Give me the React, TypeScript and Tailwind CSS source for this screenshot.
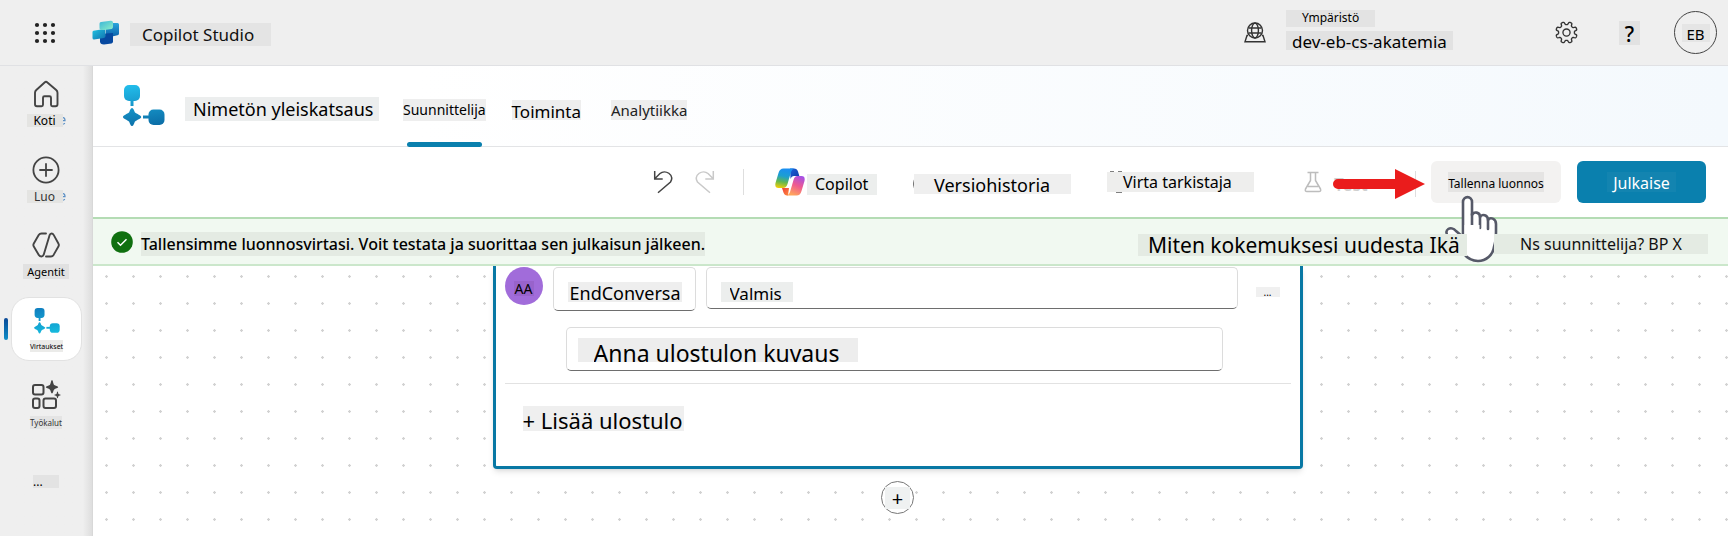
import React from "react";

function Tag({ className = "", children }: { className?: string; children?: React.ReactNode }) {
  return (
    <span className={`inline-flex shrink-0 whitespace-nowrap leading-none ${className}`}>{children}</span>
  );
}

function Waffle() {
  const c = [3, 11, 19];
  return (
    <svg width="22" height="22" viewBox="0 0 22 22" fill="#222">
      {c.map((y) => c.map((x) => <circle key={`${x}-${y}`} cx={x} cy={y} r="2.1" />))}
    </svg>
  );
}

function StudioLogo() {
  return (
    <svg width="28" height="26" viewBox="0 0 28 26">
      <defs>
        <linearGradient id="s1" x1="0" y1="0" x2="1" y2="1">
          <stop offset="0" stopColor="#3bb5d8" />
          <stop offset="1" stopColor="#8ff0c8" />
        </linearGradient>
        <linearGradient id="s2" x1="0" y1="0" x2="1" y2="1">
          <stop offset="0" stopColor="#22c3e0" />
          <stop offset="1" stopColor="#1173b0" />
        </linearGradient>
        <linearGradient id="s3" x1="0" y1="0" x2="0" y2="1">
          <stop offset="0" stopColor="#2aa5dc" />
          <stop offset="1" stopColor="#0a62ac" />
        </linearGradient>
      </defs>
      <path d="M14 3h11.500q1.500 0 1.500 1.500v9q0 1.500-1.500 1.800l-5.500 1.200h-6z" fill="url(#s3)" />
      <path d="M8 14l13-1v8.500q0 1.500-1.500 2l-7.500 1q-4 0-4-3z" fill="#0749a0" />
      <path d="M1.500 10.700l10.500-1.700q1.500 0 1.500 1.500v5.500q0 1.500-1.500 2l-10 1.500q-1.500 0-1.500-1.500v-6q0-1.100 1-1.300z" fill="url(#s2)" />
      <path d="M9 2l9.500-1.200q2.500-.300 2.500 1.700v4.500q0 1.700-1.500 2l-7 1q-5 .500-5-2v-4.200q0-1.500 1.500-1.800z" fill="url(#s1)" />
    </svg>
  );
}

function FlowIcon({ id, size, from, to }: { id: string; size: number; from: string; to: string }) {
  return (
    <svg width={size} height={size} viewBox="0 0 42 42">
      <defs>
        <linearGradient id={id} gradientUnits="userSpaceOnUse" x1="8" y1="0" x2="14" y2="42">
          <stop offset="0" stopColor={from} />
          <stop offset="1" stopColor={to} />
        </linearGradient>
      </defs>
      <g fill={`url(#${id})`}>
        <rect x="1" y="0" width="16" height="16" rx="5" />
        <rect x="7.500" y="15" width="3" height="6" />
        <path d="M9 23c1.500 0 2 2.500 2.800 4.300 2 2 6.400 2.800 6.400 4.700s-4.400 2.700-6.400 4.700C11 38.500 10.500 41 9 41s-2-2.500-2.800-4.300C4.200 34.700 0 33.900 0 32s4.200-2.700 6.200-4.700C7 25.500 7.500 23 9 23z" />
        <rect x="20" y="30.500" width="7" height="3" />
        <rect x="25.500" y="24.500" width="16" height="15.500" rx="5" />
      </g>
    </svg>
  );
}

function EnvironmentIcon() {
  return (
    <svg width="22" height="22" viewBox="0 0 22 22" fill="none" stroke="#333" strokeWidth="1.400">
      <circle cx="11" cy="8.500" r="7.500" />
      <ellipse cx="11" cy="8.500" rx="3.400" ry="7.500" />
      <path d="M4.500 6h13M4.500 11h13M4 13.500H3L1 19.800h20l-2-6.300h-1" />
    </svg>
  );
}

function gearPath() {
  let d = "";
  for (let i = 0; i < 160; i++) {
    const t = (i / 160) * Math.PI * 2;
    const r = 8.9 + 1.35 * Math.tanh(2.6 * Math.cos(8 * t + Math.PI));
    d += `${i ? "L" : "M"}${(11 + r * Math.cos(t)).toFixed(2)} ${(11 + r * Math.sin(t)).toFixed(2)}`;
  }
  return d + "Z";
}

function GearIcon() {
  return (
    <svg width="23" height="23" viewBox="0 0 22 22" fill="none" stroke="#333" strokeWidth="1.300" strokeLinejoin="round">
      <path d={gearPath()} />
      <circle cx="11" cy="11" r="3.400" />
    </svg>
  );
}

function HomeIcon() {
  return (
    <svg width="26" height="28" viewBox="0 0 26 28" fill="none" stroke="#444" strokeWidth="1.900" strokeLinejoin="round">
      <path d="M11.600 2.500q1.400-1.300 2.800 0l8.800 7.500q1.300 1.200 1.300 2.800v11.500q0 2-2 2h-3q-1.500 0-1.500-1.500v-7q0-1.500-1.500-1.500h-5q-1.500 0-1.500 1.500v7q0 1.500-1.500 1.500h-4.500q-2 0-2-2V12.800q0-1.600 1.300-2.800z" />
    </svg>
  );
}

function AddIcon() {
  return (
    <svg width="28" height="28" viewBox="0 0 28 28" fill="none" stroke="#444" strokeWidth="1.800" strokeLinecap="round">
      <circle cx="14" cy="14" r="12.600" />
      <path d="M14 8v12M8 14h12" />
    </svg>
  );
}

function AgentIcon() {
  return (
    <svg width="28" height="26" viewBox="0 0 28 26" fill="none" stroke="#444" strokeWidth="1.900" strokeLinejoin="round" strokeLinecap="round">
      <path d="M14 1.500H9.500q-1.800 0-2.800 1.600L1.800 11.500q-.900 1.500 0 3l5 8.400q1 1.600 2.700 1.600 1.500 0 2.200-1.800L17.500 3.400q.700-1.900 2-1.900 1.400 0 2.300 1.600l4.600 8.400q.900 1.500 0 3l-4.800 8.400q-1 1.600-2.600 1.600H14" />
    </svg>
  );
}

function ToolsIcon() {
  return (
    <svg width="30" height="30" viewBox="0 0 30 30" fill="none" stroke="#444" strokeWidth="2">
      <rect x="2" y="5" width="10.500" height="9.500" rx="2" />
      <rect x="2" y="18.500" width="6.500" height="9.500" rx="2" />
      <rect x="12.500" y="18.500" width="12.500" height="9.500" rx="2" />
      <path stroke="none" fill="#444" d="M21 0c1 0 1.200 4 2.200 5s4 1.200 4 2.200-3 1.200-4 2.200-1.200 4-2.200 4-1.200-3-2.200-4-4-1.200-4-2.200 3-1.200 4-2.200S20 0 21 0zM26.500 11.500c.600 0 .600 2 1.100 2.500s2.200.500 2.200 1-1.700.600-2.200 1.100-.500 2.200-1.100 2.200-.600-1.700-1.100-2.200-2.200-.600-2.200-1.100 1.700-.500 2.200-1 .500-2.500 1.100-2.500z" />
    </svg>
  );
}

function UndoIcon({ color, flip = false }: { color: string; flip?: boolean }) {
  return (
    <svg width="20" height="24" viewBox="0 0 20 24" fill="none" stroke={color} strokeWidth="1.500" className={flip ? "-scale-x-100" : ""}>
      <path d="M1.700 1v8h8M2 8.500l5-5c5-4.500 15 1 10.500 8.500L5 22.800" />
    </svg>
  );
}

function CopilotLogo() {
  return (
    <svg width="30" height="28" viewBox="0 0 30 28">
      <defs>
        <linearGradient id="c1" x1=".3" y1="0" x2=".1" y2="1">
          <stop offset="0" stopColor="#1a8ff0" />
          <stop offset=".35" stopColor="#1c9fd0" />
          <stop offset=".65" stopColor="#62b850" />
          <stop offset="1" stopColor="#ffd000" />
        </linearGradient>
        <linearGradient id="c2" x1=".8" y1="0" x2=".4" y2="1">
          <stop offset="0" stopColor="#a34fe8" />
          <stop offset=".5" stopColor="#ef5a90" />
          <stop offset="1" stopColor="#ffa55c" />
        </linearGradient>
        <linearGradient id="c3" x1="0" y1="0" x2="1" y2="1">
          <stop offset="0" stopColor="#1b60d8" />
          <stop offset="1" stopColor="#0f3aa8" />
        </linearGradient>
        <linearGradient id="c4" x1="0" y1="0" x2="1" y2="1">
          <stop offset="0" stopColor="#f0403c" />
          <stop offset="1" stopColor="#ff8a3c" />
        </linearGradient>
      </defs>
      <path d="M15 .500h4q3 0 4 3l1.300 4.500H19q-2.500 0-3.500 3z" fill="url(#c3)" />
      <path d="M7 20h7l-1 7.500h-1q-2.500 0-3.500-3z" fill="url(#c4)" />
      <path d="M8.500.500H19q-2 .500-3 3.500l-3.500 12Q11.300 20 8 20H3.500q-4 0-3-5l3-10Q4.700.500 8.500.500z" fill="url(#c1)" />
      <path d="M21.500 27.500H12q2-.500 3-3.500l3.500-12Q19.500 8 22.500 8h4q4 0 3 5l-3 10q-1.200 4.500-5 4.500z" fill="url(#c2)" />
    </svg>
  );
}

function FlaskIcon() {
  return (
    <svg width="18" height="22" viewBox="0 0 18 22" fill="none" stroke="#bdbdbd" strokeWidth="1.500" strokeLinejoin="round">
      <path d="M3.500 1.500h11M6.500 1.500v8L1.500 18q-.800 2.500 1.500 2.500h12q2.300 0 1.500-2.500l-5-8.500v-8M4 15.500h10" />
    </svg>
  );
}

function HistoryIcon() {
  return (
    <svg width="20" height="22" viewBox="0 0 20 22" fill="none" stroke="#777" strokeWidth="1.500">
      <circle cx="10" cy="11" r="9.300" />
    </svg>
  );
}

function CheckerIcon() {
  return (
    <svg width="22" height="22" viewBox="0 0 22 22" fill="none" stroke="#555" strokeWidth="1.500">
      <path d="M2 1h4M10 1h4M8 21h6" />
    </svg>
  );
}

function RedArrow() {
  return (
    <svg width="92" height="30" viewBox="0 0 92 30" fill="#ea1c1c">
      <path d="M5 10h57V0l30 15-30 15V20H5A5 5 0 0 1 5 10z" />
    </svg>
  );
}

function HandPointer() {
  return (
    <svg width="54" height="68" viewBox="0 0 54 68" fill="#fff" stroke="#565968" strokeWidth="2.600" strokeLinecap="round" strokeLinejoin="round">
      <path d="M19 38V7c0-6.500 9-6.500 9 0v13c2-4 8-3 8 2 2-3.500 8-2 8 3 2-3 8-2 8 4v8q0 9-2 15c-1 8-8 14-16 14-6 0-11-3-15-8L4 41c-5-6 3-11 8-5l7 6z" />
      <path fill="none" d="M28 19v12M36 22v11M44 25v9" />
      <path fill="#fff" stroke="none" d="M20.500 30h15v30h-15z" />
    </svg>
  );
}

function Remnant() {
  return (
    <svg width="3" height="8" viewBox="0 0 3 8" fill="none" stroke="#5b8fc4" strokeWidth="1.200">
      <path d="M0 .600q2 0 2 3H0M0 7.300l2-1" />
    </svg>
  );
}

function NavItem({ icon, children }: { icon: React.ReactNode; children: React.ReactNode }) {
  return (
    <a href="#" className="flex flex-col items-center gap-1.5">
      {icon}
      {children}
    </a>
  );
}

const field = "flex rounded-[5px] border border-[#dcdcdc] border-b-[#6e6e6e] bg-white";

export default function App() {
  return (
    <div className="flex min-h-screen flex-col bg-[#efefef] font-['Noto_Sans','Open_Sans',sans-serif] text-black">
      <header className="flex h-[66px] shrink-0 items-center border-b border-[#e0e1e4] pr-[11px] pl-[34px]">
        <button aria-label="Sovellukset"><Waffle /></button>
        <a href="#" className="ml-9 flex items-center gap-2.5">
          <StudioLogo />
          <Tag className="mt-1 h-[23px] w-[141px] items-center bg-[#e4e4e4] pl-3 text-[17px] text-[#111]">Copilot Studio</Tag>
        </a>
        <div className="ml-auto flex items-center">
          <EnvironmentIcon />
          <div className="ml-5 flex w-[166px] flex-col items-start gap-1 pb-1.5">
            <Tag className="h-[17px] items-center bg-[#e3e3e3] px-4 text-[12px]">Ympäristö</Tag>
            <Tag className="h-[19px] items-end bg-[#e2e2e2] px-1.5 text-[17px]">dev-eb-cs-akatemia</Tag>
          </div>
          <button aria-label="Asetukset" className="ml-[103px]"><GearIcon /></button>
          <button className="ml-[41px] flex">
            <Tag className="h-6 w-[21px] items-end justify-center bg-[#e2e2e2] text-[21px] font-medium">?</Tag>
          </button>
          <button className="ml-[34px] flex size-[43px] items-center justify-center rounded-full border border-[#444]">
            <Tag className="h-[18px] w-7 items-end justify-center bg-[#e5e5e5] text-[15px]">EB</Tag>
          </button>
        </div>
      </header>

      <div className="flex grow">
        <nav className="flex w-[93px] shrink-0 flex-col items-center border-r border-[#d8d8d8] bg-linear-to-r from-[#efefef] from-90% to-[#dedede] pt-3.5">
          <NavItem icon={<HomeIcon />}>
            <span className="flex items-center">
              <Tag className="h-[13px] w-9 items-end justify-center bg-[#e4e4e2] text-[12px]">Koti</Tag>
              <Remnant />
            </span>
          </NavItem>
          <div className="h-[29px]" />
          <NavItem icon={<AddIcon />}>
            <span className="flex items-center">
              <Tag className="h-[13px] w-9 items-end justify-center bg-[#e4e4e2] text-[12px] text-[#333]">Luo</Tag>
              <Remnant />
            </span>
          </NavItem>
          <div className="h-[29px]" />
          <NavItem icon={<AgentIcon />}>
            <Tag className="h-[15px] w-[46px] items-center justify-center bg-[#e1e1e1] text-[11px]">Agentit</Tag>
          </NavItem>
          <div className="mt-[18px] flex w-full items-center gap-[3px] pl-1">
            <span className="h-[22px] w-1 rounded-sm bg-linear-to-b from-[#0b4896] to-[#118fc8]" />
            <a href="#" className="flex h-16 w-[71px] flex-col items-center gap-1.5 rounded-[18px] border border-[#e2e2e2] bg-white pt-2.5">
              <FlowIcon id="f2" size={26} from="#107fc0" to="#16b9dd" />
              <Tag className="h-3 items-center bg-[#ebebe9] text-[7px]">Virtaukset</Tag>
            </a>
          </div>
          <div className="mt-[19px]">
            <NavItem icon={<ToolsIcon />}>
              <Tag className="h-[13px] items-center bg-[#e4e4e4] text-[8px] text-[#333]">Työkalut</Tag>
            </NavItem>
          </div>
          <button className="mt-[46px] flex">
            <Tag className="h-[13px] w-[26px] items-end bg-[#e3e3e3] text-[12px]">...</Tag>
          </button>
        </nav>

        <main className="flex min-w-0 grow flex-col bg-white">
          <div className="flex h-[81px] shrink-0 items-center border-b border-[#e3e4e6] bg-linear-to-r from-white from-20% to-[#f4f9fd] pl-[30px]">
            <FlowIcon id="f1" size={42} from="#22bdeb" to="#0c6fa8" />
            <h1 className="mt-1.5 ml-5 flex"><Tag className="h-6 w-[194px] items-center bg-[#eceeee] pl-2 text-[18px]">Nimetön yleiskatsaus</Tag></h1>
            <div role="tablist" className="ml-6 flex h-full items-center gap-[26px]">
              <button role="tab" aria-selected="true" className="relative flex h-full items-center pt-2">
                <Tag className="h-[22px] items-center bg-[#eeeeee] text-[14px]">Suunnittelija</Tag>
                <span className="absolute inset-x-1 -bottom-px h-[5px] rounded-full bg-[#0a80ae]" />
              </button>
              <button role="tab" className="flex pt-2"><Tag className="h-5 items-end bg-[#eeeeee] text-[17px]">Toiminta</Tag></button>
              <button role="tab" className="ml-1 flex pt-2"><Tag className="h-5 items-center bg-[#eeeeee] text-[15px] text-[#222]">Analytiikka</Tag></button>
            </div>
          </div>

          <div className="flex h-[70px] shrink-0 items-center justify-end pr-[22px]">
            <button aria-label="Kumoa"><UndoIcon color="#444" /></button>
            <button aria-label="Tee uudelleen" className="ml-[22px]"><UndoIcon color="#c9c9c9" flip /></button>
            <span className="ml-7 h-[26px] w-px bg-[#dedede]" />
            <button className="ml-[31px] flex items-center gap-0.5">
              <CopilotLogo />
              <Tag className="mt-1 h-[21px] w-[70px] items-center bg-[#eceeed] pl-2 text-[16px]">Copilot</Tag>
            </button>
            <button className="relative ml-9 flex pt-1">
              <span className="absolute top-[3px] left-0"><HistoryIcon /></span>
              <Tag className="relative ml-px h-5 w-[157px] items-end bg-[#efefef] pl-5 text-[18px]">Versiohistoria</Tag>
            </button>
            <button className="relative ml-9 flex">
              <span className="absolute -top-px left-px"><CheckerIcon /></span>
              <Tag className="relative h-5 w-[147px] items-center bg-[#eeeeed] pl-4 text-[16px]">Virta tarkistaja</Tag>
            </button>
            <div className="relative ml-[50px] flex w-[112px] items-center gap-3">
              <FlaskIcon />
              <span className="pt-1 text-[17px] leading-none font-semibold text-[#d0d0d0]">Test</span>
              <span className="absolute top-0 right-0 h-[26px] w-px bg-[#dedede]" />
              <span className="absolute -top-0.5 left-[29px]"><RedArrow /></span>
            </div>
            <div className="relative ml-[15px]">
              <button className="flex h-[42px] w-[130px] items-center justify-center rounded-md bg-[#f3f2f1]">
                <Tag className="h-5 items-end bg-[#e5e4e3] pb-0.5 text-[12px]">Tallenna luonnos</Tag>
              </button>
              <span className="pointer-events-none absolute top-[34px] left-[13px] z-20"><HandPointer /></span>
            </div>
            <button className="ml-4 flex h-[42px] w-[129px] items-center justify-center rounded-md bg-[#0a80ae]">
              <Tag className="h-5 w-[69px] items-end justify-center bg-[#1384b0] pb-px text-[16px] text-white">Julkaise</Tag>
            </button>
          </div>

          <div role="status" className="flex h-[49px] shrink-0 items-center border-y-2 border-t-[#b4dcb4] border-b-[#cbe7cb] bg-[#f1f9f1] pr-5 pl-[18px]">
            <svg width="22" height="22" viewBox="0 0 22 22" fill="none">
              <circle cx="11" cy="11" r="10.800" fill="#107010" />
              <path d="M6.500 11.300l3 3 6-6" stroke="#fff" strokeWidth="1.500" />
            </svg>
            <Tag className="mt-1 ml-2 h-6 items-center bg-[#e4ebe3] text-[16px] font-medium">
              Tallensimme luonnosvirtasi. Voit testata ja suorittaa sen julkaisun jälkeen.
            </Tag>
            <Tag className="relative z-30 mt-1.5 ml-auto h-[22px] w-[329px] items-end bg-[#e4ebe3] pl-2.5 text-[21px]">
              Miten kokemuksesi uudesta Ikä
            </Tag>
            <Tag className="relative z-30 mt-1 ml-[27px] h-5 w-[214px] items-center bg-[#e4ebe3] pl-[26px] text-[16px] text-[#111]">
              Ns suunnittelija? BP X
            </Tag>
          </div>

          <div className="flex grow flex-col items-center bg-[radial-gradient(circle,#d2d2d2_1px,transparent_1.5px)] bg-size-[27px_27px] bg-position-[0px_-3px] pr-[26px]">
            <section className="w-full max-w-[810px] rounded-b-sm border-3 border-t-0 border-[#0878a4] bg-white px-[9px] pt-px shadow-md">
              <div className="flex items-start">
                <span className="flex size-[38px] shrink-0 items-center justify-center rounded-full bg-[#a16cda]">
                  <Tag className="mt-1 h-[15px] w-5 items-end justify-center bg-[#9863cb] text-[14px]">AA</Tag>
                </span>
                <label className={`${field} ml-2.5 h-11 w-[143px] shrink-0 pt-3.5 pl-3.5`}>
                  <input aria-label="Nimi" defaultValue="EndConversa" className="h-5 w-[114px] bg-[#eeeeee] pt-0.5 pl-0.5 text-[18px] leading-none" />
                </label>
                <label className={`${field} ml-2.5 h-[42px] min-w-0 grow pt-3.5 pl-3.5`}>
                  <input aria-label="Arvo" defaultValue="Valmis" className="h-5 w-[72px] bg-[#eceeed] pt-0.5 pl-[9px] text-[17px] leading-none" />
                </label>
                <button className="mt-5 mr-[11px] ml-[18px] flex">
                  <Tag className="h-2.5 w-6 items-center justify-center bg-[#f0f0f0] text-[10px]">...</Tag>
                </button>
              </div>
              <label className={`${field} mt-4 mr-[68px] ml-[61px] h-11 pt-2.5 pl-[11px]`}>
                <input aria-label="Kuvaus" defaultValue="Anna ulostulon kuvaus" className="h-6 w-[280px] bg-[#ededed] pt-1.5 pl-4 text-[23px] leading-none" />
              </label>
              <hr className="mt-3 border-[#e2e2e2]" />
              <button className="mt-[22px] mb-[35px] ml-[18px] flex">
                <Tag className="h-[25px] items-end bg-[#efefef] pr-px text-[22px]">+ Lisää ulostulo</Tag>
              </button>
            </section>
            <button className="mt-3 flex size-[33px] items-center justify-center rounded-full border border-[#777] bg-white">
              <Tag className="h-[22px] w-[25px] items-end justify-center bg-[#eff1f1] text-[20px]">+</Tag>
            </button>
          </div>
        </main>
      </div>
    </div>
  );
}
